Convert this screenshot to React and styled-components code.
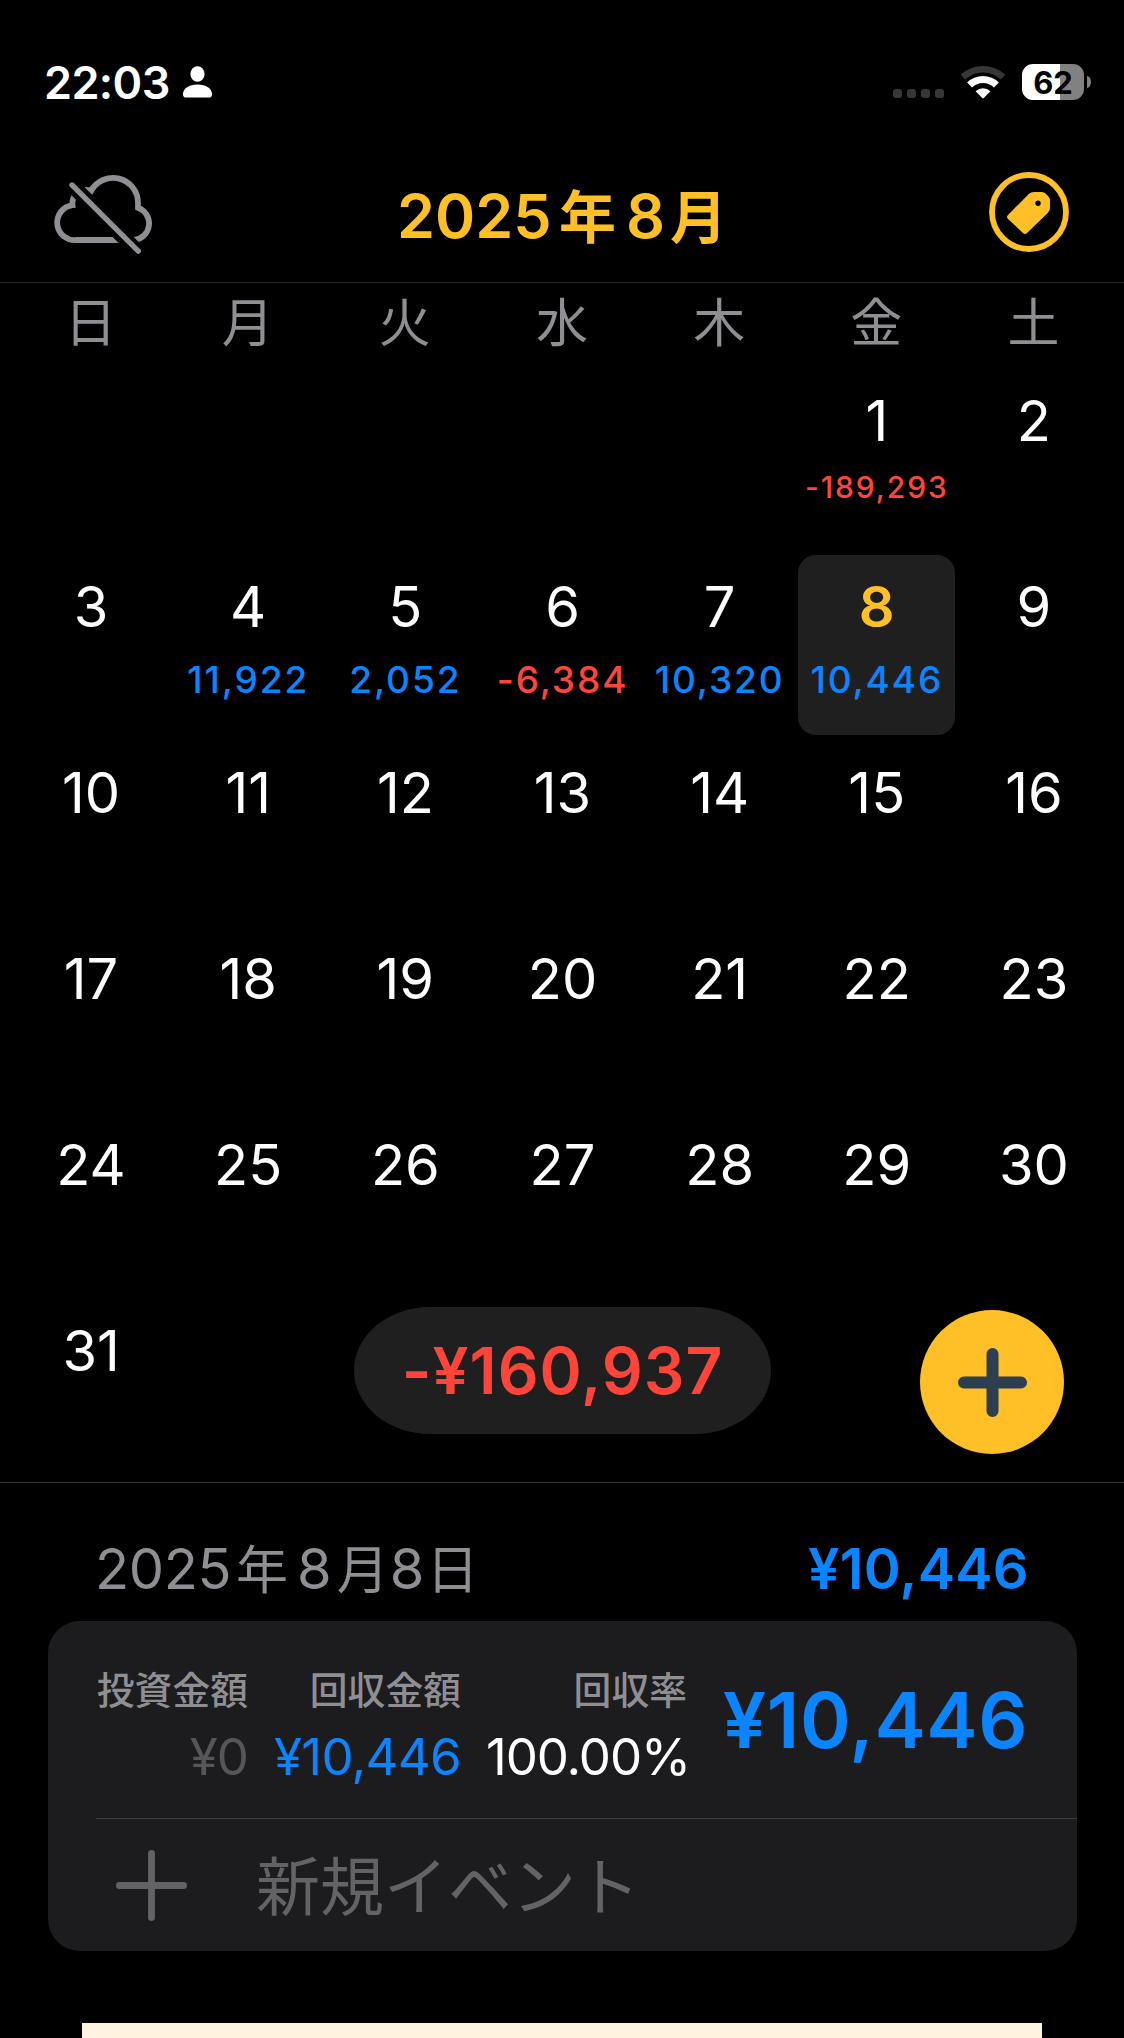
import React from 'react';
import styled, { createGlobalStyle } from 'styled-components';

const color = {
  gold: '#ffbf27',
  blue: '#0b84ff',
  red: '#ff453a',
  gray: '#8e8e93',
  panel: '#1c1c1e',
  raised: '#1f1f1f',
};

const GlobalStyle = createGlobalStyle`
  * { box-sizing: border-box; }
  body {
    margin: 0;
    background: #000;
    color: #fff;
    font-family: Inter, "Noto Sans CJK JP", sans-serif;
  }
  svg { display: block; flex: none; }
`;

const Screen = styled.div`
  width: 1124px;
  height: 2038px;
  overflow: hidden;
  display: flex;
  flex-direction: column;
  background: #000;
  white-space: nowrap;
`;

const StatusBar = styled.header`
  height: 150px;
  padding: 14px 33px 0 44px;
  display: flex;
  align-items: center;
  justify-content: space-between;
`;

const StatusGroup = styled.div`
  display: flex;
  align-items: center;
`;

const Clock = styled.span`
  font-size: 45px;
  font-weight: 600;
  line-height: 54px;
  letter-spacing: -0.6px;
  margin: 1px 13px 0 0;
`;

const SignalDots = styled.div`
  display: flex;
  gap: 5px;
  margin: 23px 16px 0 0;
`;

const Dot = styled.i`
  width: 9px;
  height: 9px;
  border-radius: 3px;
  background: #363636;
`;

const Battery = styled.div`
  width: 62px;
  height: 36px;
  margin: 0 3px 0 16px;
  border-radius: 11px;
  background: linear-gradient(90deg, #fff 38px, #818181 38px);
  color: #000;
  font-size: 31px;
  font-weight: 700;
  line-height: 37px;
  text-align: center;
`;

const BatteryTip = styled.i`
  width: 4px;
  height: 12px;
  border-radius: 0 4px 4px 0 / 0 6px 6px 0;
  background: #818181;
`;

const NavBar = styled.nav`
  height: 133px;
  padding: 0 55px 0 53px;
  display: grid;
  grid-template-columns: 106px 1fr 80px;
  align-items: center;
  border-bottom: 1px solid #272729;
`;

const CloudButton = styled.button`
  padding: 0;
  border: 0;
  background: none;
  margin-top: -4px;
`;

const Title = styled.h1`
  margin: 2px 0 0 -24px;
  display: flex;
  justify-content: center;
  align-items: baseline;
  color: ${color.gold};
  font-size: 61px;
  font-weight: 600;
  line-height: 74px;
`;

const TitleKanji = styled.span`
  font-size: 57px;
  margin: ${(p) => p.$margin};
`;

const TagButton = styled.button`
  padding: 0;
  border: 0;
  background: none;
  margin-top: -8px;
`;

const Calendar = styled.main`
  position: relative;
  height: 1200px;
  padding: 0 12px;
  border-bottom: 1px solid #313133;
`;

const Weekdays = styled.div`
  height: 86px;
  display: grid;
  grid-template-columns: repeat(7, 1fr);
  text-align: center;
  color: ${color.gray};
  font-size: 52px;
  line-height: 81px;
`;

const Days = styled.div`
  display: grid;
  grid-template-columns: repeat(7, 1fr);
  grid-auto-rows: 180px;
  row-gap: 6px;
`;

const Day = styled.div`
  padding: 22px 0 0 1px;
  display: flex;
  flex-direction: column;
  align-items: center;
  border-radius: 18px;
  background: ${(p) => (p.$selected ? color.raised : 'none')};
`;

const DayNumber = styled.span`
  font-size: 56px;
  line-height: 60px;
  font-weight: ${(p) => (p.$selected ? 600 : 400)};
  color: ${(p) => (p.$selected ? color.gold : '#fff')};
`;

const DayAmount = styled.span`
  margin-top: ${(p) => (p.$small ? 14 : 21)}px;
  font-size: ${(p) => (p.$small ? 30 : 37)}px;
  line-height: 44px;
  font-weight: 500;
  letter-spacing: 1.9px;
  color: ${(p) => (p.$negative ? color.red : color.blue)};
`;

const MonthTotal = styled.div`
  position: absolute;
  left: 354px;
  top: 1024px;
  width: 417px;
  height: 127px;
  border-radius: 76px / 63.5px;
  background: ${color.raised};
  color: ${color.red};
  font-size: 64px;
  font-weight: 600;
  line-height: 128px;
  letter-spacing: 1px;
  text-align: center;
`;

const AddButton = styled.button`
  position: absolute;
  left: 920px;
  top: 1027px;
  width: 144px;
  height: 144px;
  padding: 0;
  border: 0;
  border-radius: 50%;
  background: ${color.gold};
  display: grid;
  place-items: center;
`;

const DayHeader = styled.div`
  height: 138px;
  padding: 0 95px 22px 95px;
  display: flex;
  align-items: flex-end;
  justify-content: space-between;
  font-size: 56px;
  line-height: 60px;
`;

const DateText = styled.div`
  display: flex;
  align-items: baseline;
  margin-bottom: -2px;
  color: ${color.gray};
`;

const DatePart = styled.span`
  font-size: ${(p) => (p.$kanji ? 52 : 56)}px;
  margin-right: ${(p) => p.$after || 0}px;
  letter-spacing: ${(p) => (p.$kanji ? 0 : -0.4)}px;
`;

const DayTotal = styled.span`
  color: ${color.blue};
  font-weight: 600;
  letter-spacing: 0.3px;
`;

const Card = styled.section`
  width: 1029px;
  height: 330px;
  margin-left: 48px;
  padding-left: 48px;
  border-radius: 32px;
  background: ${color.panel};
`;

const EventRow = styled.div`
  height: 198px;
  display: flex;
  align-items: center;
  border-bottom: 1px solid #3e3e41;
`;

const Figure = styled.div`
  width: ${(p) => p.$width}px;
  margin-top: 13px;
  display: flex;
  flex-direction: column;
  align-items: flex-end;
  gap: 12px;
`;

const FigureLabel = styled.span`
  color: ${color.gray};
  font-size: 37.8px;
  font-weight: 500;
  line-height: 50px;
`;

const FigureValue = styled.span`
  color: ${(p) => p.$color};
  margin-right: ${(p) => p.$outset || 0}px;
  font-size: 51px;
  line-height: 60px;
  letter-spacing: ${(p) => p.$tracking}px;
`;

const EventTotal = styled.strong`
  flex: 1;
  padding-right: 49px;
  text-align: right;
  color: ${color.blue};
  font-size: 77px;
  font-weight: 600;
  line-height: 92px;
  letter-spacing: 0.6px;
`;

const NewEventRow = styled.div`
  height: 132px;
  padding-left: 20px;
  display: flex;
  align-items: center;
  gap: 69px;
  color: #636366;
`;

const NewEventLabel = styled.span`
  margin-top: 4px;
  font-size: 64px;
  line-height: 80px;
`;

const Banner = styled.footer`
  width: 960px;
  height: 15px;
  margin: 72px 0 0 82px;
  background: #fff2df;
`;

const PersonIcon = () => (
  <svg width="29" height="32" viewBox="0 0 29 32" fill="#fff">
    <ellipse cx="14.5" cy="8" rx="7.1" ry="7.7" />
    <path d="M0 28.2C0 22.5 6 18.6 14.5 18.6S29 22.5 29 28.2C29 30.5 28 31.6 25.6 31.6H3.4C1 31.6 0 30.5 0 28.2Z" />
  </svg>
);

const WifiIcon = () => (
  <svg width="46" height="36" viewBox="0 0 46 36" fill="none">
    <path d="M2.9 13.2A29.5 29.5 0 0 1 43.1 13.2" stroke="#363636" strokeWidth="6.6" />
    <path d="M9.6 21A19 19 0 0 1 36.4 21" stroke="#fff" strokeWidth="7" />
    <path d="M15.6 27.2A10.6 10.6 0 0 1 30.4 27.2L24 33.8Q23 34.8 22 33.8Z" fill="#fff" />
  </svg>
);

const CloudOffIcon = () => (
  <svg width="106" height="85" viewBox="12 12 106 85" fill="none" stroke={color.gray} strokeWidth="5.8">
    <path d="M36 80H93A16.6 16.6 0 0 0 97 47.8V43A25 25 0 0 0 50 31A13.5 13.5 0 0 0 31.5 45.2A17.5 17.5 0 0 0 36 80Z" />
    <path d="M28 22L99 94" stroke="#000" strokeWidth="15" />
    <path d="M31 25L97.3 91.2" strokeWidth="5.4" strokeLinecap="round" />
  </svg>
);

const TagIcon = () => (
  <svg width="80" height="80" viewBox="0 0 80 80">
    <circle cx="40" cy="40" r="37" fill="none" stroke={color.gold} strokeWidth="5.8" />
    <path
      fill={color.gold}
      fillRule="evenodd"
      d="M19 43L39.5 22.2Q42 20 45 20H53Q55 20 56.5 21.5L59.5 24.6Q61 26.4 61 29V36Q61 38.6 59 40.8L38 61Q36 63 34 61L19 47Q17 45 19 43ZM49 28.6A2.7 2.7 0 1 0 49 34A2.7 2.7 0 1 0 49 28.6Z"
    />
  </svg>
);

const PlusIcon = ({ size, weight, stroke }) => (
  <svg width={size} height={size} viewBox={`0 0 ${size} ${size}`} fill="none">
    <path
      d={`M${size / 2} ${weight / 2}V${size - weight / 2}M${weight / 2} ${size / 2}H${size - weight / 2}`}
      stroke={stroke}
      strokeWidth={weight}
      strokeLinecap="round"
    />
  </svg>
);

const weekdays = ['日', '月', '火', '水', '木', '金', '土'];
const amounts = {
  1: '-189,293',
  4: '11,922',
  5: '2,052',
  6: '-6,384',
  7: '10,320',
  8: '10,446',
};
const leadingBlanks = 5;
const selectedDay = 8;
const cells = [
  ...Array(leadingBlanks).fill(null),
  ...Array.from({ length: 31 }, (_, i) => i + 1),
];

export default function App() {
  return (
    <>
      <GlobalStyle />
      <Screen>
        <StatusBar>
          <StatusGroup>
            <Clock>22:03</Clock>
            <PersonIcon />
          </StatusGroup>
          <StatusGroup>
            <SignalDots>
              <Dot /><Dot /><Dot /><Dot />
            </SignalDots>
            <WifiIcon />
            <Battery>62</Battery>
            <BatteryTip />
          </StatusGroup>
        </StatusBar>

        <NavBar>
          <CloudButton>
            <CloudOffIcon />
          </CloudButton>
          <Title>
            <span>2025</span>
            <TitleKanji $margin="0 10px 0 7.5px">年</TitleKanji>
            <span>8</span>
            <TitleKanji $margin="0 0 0 5px">月</TitleKanji>
          </Title>
          <TagButton>
            <TagIcon />
          </TagButton>
        </NavBar>

        <Calendar>
          <Weekdays>
            {weekdays.map((d) => (
              <span key={d}>{d}</span>
            ))}
          </Weekdays>
          <Days>
            {cells.map((day, i) => {
              const amount = amounts[day];
              const selected = day === selectedDay;
              return (
                <Day key={i} $selected={selected}>
                  {day && <DayNumber $selected={selected}>{day}</DayNumber>}
                  {amount && (
                    <DayAmount $negative={amount.startsWith('-')} $small={amount.length > 7}>
                      {amount}
                    </DayAmount>
                  )}
                </Day>
              );
            })}
          </Days>
          <MonthTotal>-¥160,937</MonthTotal>
          <AddButton>
            <PlusIcon size={69} weight={12} stroke="#2c3e50" />
          </AddButton>
        </Calendar>

        <DayHeader>
          <DateText>
            <DatePart $after={5}>2025</DatePart>
            <DatePart $kanji $after={9}>年</DatePart>
            <DatePart $after={5.5}>8</DatePart>
            <DatePart $kanji $after={1}>月</DatePart>
            <DatePart $after={2.5}>8</DatePart>
            <DatePart $kanji>日</DatePart>
          </DateText>
          <DayTotal>¥10,446</DayTotal>
        </DayHeader>

        <Card>
          <EventRow>
            <Figure $width={152}>
              <FigureLabel>投資金額</FigureLabel>
              <FigureValue $color="#565658" $tracking={-1}>¥0</FigureValue>
            </Figure>
            <Figure $width={213}>
              <FigureLabel>回収金額</FigureLabel>
              <FigureValue $color={color.blue} $tracking={-0.7}>¥10,446</FigureValue>
            </Figure>
            <Figure $width={226}>
              <FigureLabel>回収率</FigureLabel>
              <FigureValue $color="#fff" $tracking={-1.1} $outset={-3}>100.00%</FigureValue>
            </Figure>
            <EventTotal>¥10,446</EventTotal>
          </EventRow>
          <NewEventRow>
            <PlusIcon size={71} weight={6.8} stroke="#636366" />
            <NewEventLabel>新規イベント</NewEventLabel>
          </NewEventRow>
        </Card>

        <Banner />
      </Screen>
    </>
  );
}
